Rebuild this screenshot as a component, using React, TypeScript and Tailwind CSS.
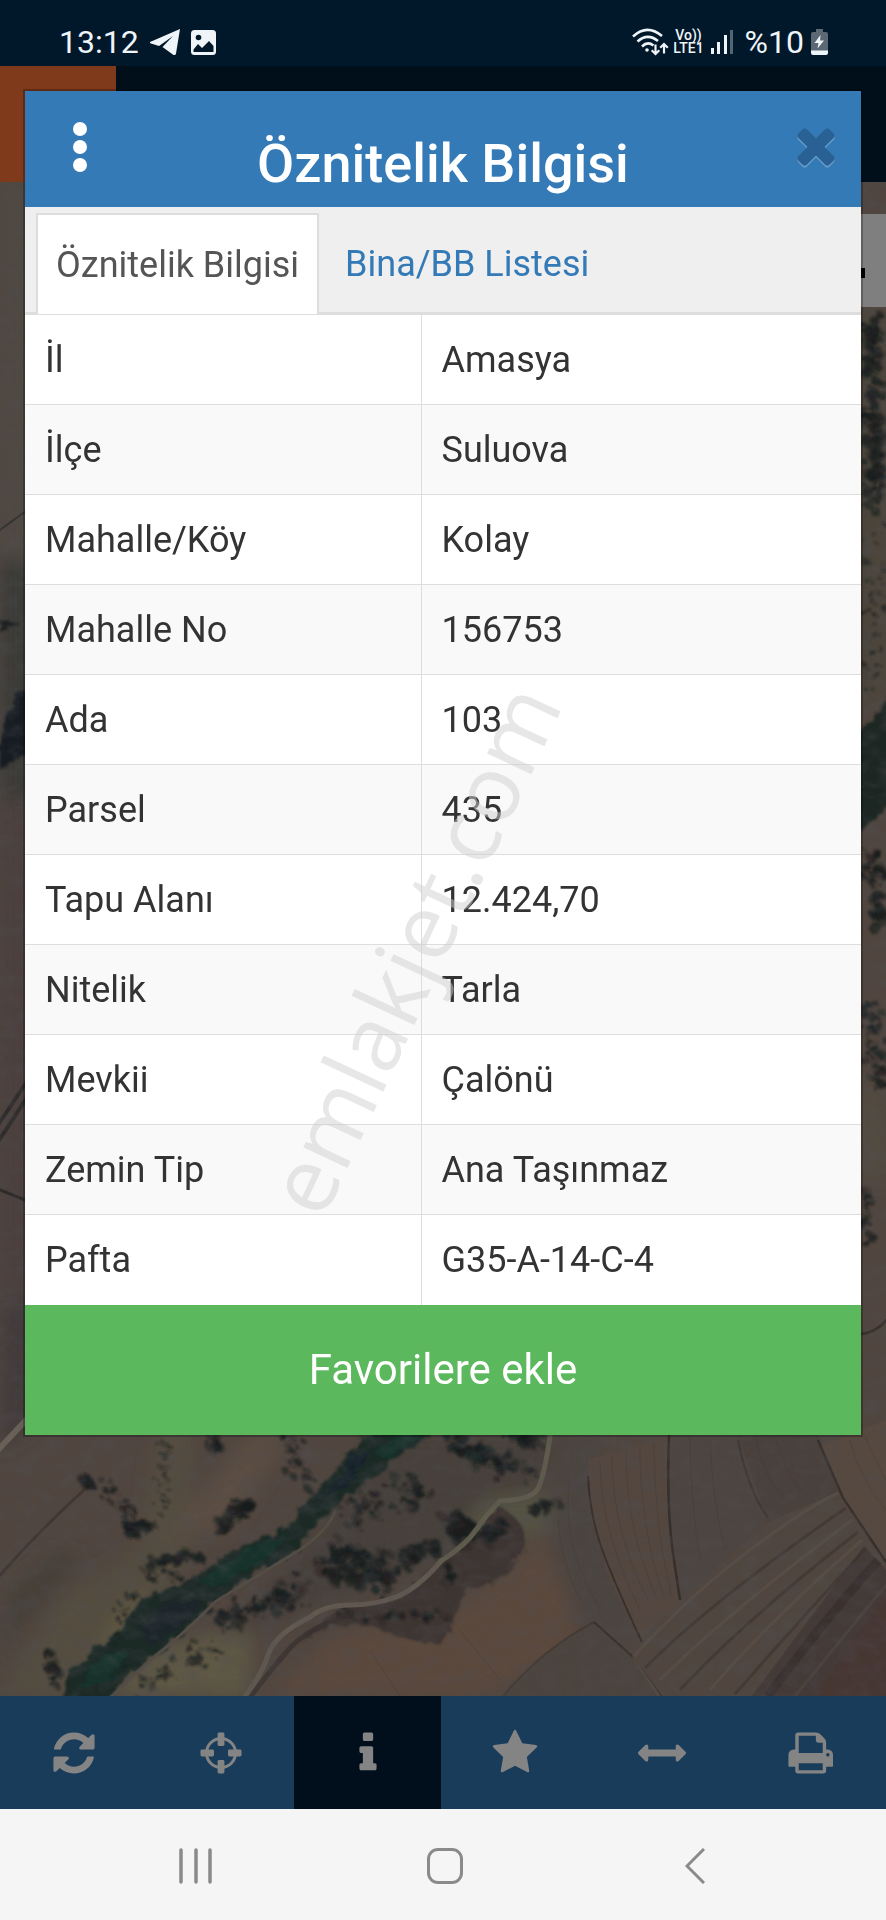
import React, { useState } from 'react';

interface Attribute {
  label: string;
  value: string;
}

interface Blob {
  x: number;
  y: number;
  rx: number;
  ry: number;
  fill: string;
  opacity: number;
}

interface Patch {
  x1: number;
  y1: number;
  x2: number;
  y2: number;
  spread: number;
  count: number;
  size: number;
}

const attributes: Attribute[] = [
  { label: 'İl', value: 'Amasya' },
  { label: 'İlçe', value: 'Suluova' },
  { label: 'Mahalle/Köy', value: 'Kolay' },
  { label: 'Mahalle No', value: '156753' },
  { label: 'Ada', value: '103' },
  { label: 'Parsel', value: '435' },
  { label: 'Tapu Alanı', value: '12.424,70' },
  { label: 'Nitelik', value: 'Tarla' },
  { label: 'Mevkii', value: 'Çalönü' },
  { label: 'Zemin Tip', value: 'Ana Taşınmaz' },
  { label: 'Pafta', value: 'G35-A-14-C-4' },
];

const REFRESH =
  'M1511 1056q0 5-1 7-64 268-268 434.5t-478 166.5q-146 0-282.5-55t-243.5-157l-129 129q-19 19-45 19t-45-19-19-45v-448q0-26 19-45t45-19h448q26 0 45 19t19 45-19 45l-137 137q71 66 161 102t187 36q134 0 250-65t186-179q11-17 53-117 8-23 30-23h192q13 0 22.5 9.5t9.5 22.5zm25-800v448q0 26-19 45t-45 19h-448q-26 0-45-19t-19-45 19-45l138-138q-148-137-349-137-134 0-250 65t-186 179q-11 17-53 117-8 23-30 23h-199q-13 0-22.5-9.5t-9.5-22.5v-7q65-268 270-434.5t480-166.5q146 0 284 55.5t245 156.5l130-129q19-19 45-19t45 19 19 45z';
const INFO =
  'M1216 1344v128q0 26-19 45t-45 19h-512q-26 0-45-19t-19-45v-128q0-26 19-45t45-19h64v-384h-64q-26 0-45-19t-19-45v-128q0-26 19-45t45-19h384q26 0 45 19t19 45v576h64q26 0 45 19t19 45zm-128-1152v192q0 26-19 45t-45 19h-256q-26 0-45-19t-19-45v-192q0-26 19-45t45-19h256q26 0 45 19t19 45z';
const STAR =
  'M1728 647q0 22-26 48l-363 354 86 500q1 7 1 20 0 21-10.5 35.5t-30.5 14.5q-19 0-40-12l-449-236-449 236q-22 12-40 12-21 0-31.5-14.5t-10.5-35.5q0-6 2-20l86-500-364-354q-25-27-25-48 0-37 56-46l502-73 225-455q19-41 49-41t49 41l225 455 502 73q56 9 56 46z';
const ARROWS =
  'M1792 896q0 26-19 45l-256 256q-19 19-45 19t-45-19-19-45v-128h-1024v128q0 26-19 45t-45 19-45-19l-256-256q-19-19-19-45t19-45l256-256q19-19 45-19t45 19 19 45v128h1024v-128q0-26 19-45t45-19 45 19l256 256q19 19 19 45z';
const PRINT =
  'M448 1536h896v-256h-896v256zm0-640h896v-384h-160q-40 0-68-28t-28-68v-160h-640v640zm1152 64q0-26-19-45t-45-19-45 19-19 45 19 45 45 19 45-19 19-45zm128 0v416q0 13-9.5 22.5t-22.5 9.5h-224v160q0 40-28 68t-68 28h-960q-40 0-68-28t-28-68v-160h-224q-13 0-22.5-9.5t-9.5-22.5v-416q0-79 56.5-135.5t135.5-56.5h64v-544q0-40 28-68t68-28h672q40 0 88 20t76 48l152 152q28 28 48 76t20 88v256h64q79 0 135.5 56.5t56.5 135.5z';
const TIMES =
  'M1490 1322q0 40-28 68l-136 136q-28 28-68 28t-68-28l-294-294-294 294q-28 28-68 28t-68-28l-136-136q-28-28-28-68t28-68l294-294-294-294q-28-28-28-68t28-68l136-136q28-28 68-28t68 28l294 294 294-294q28-28 68-28t68 28l136 136q28 28 28 68t-28 68l-294 294 294 294q28 28 28 68z';

interface FaIconProps {
  path: string;
  viewBox?: string;
  className?: string;
}

const FaIcon: React.FC<FaIconProps> = ({ path, viewBox = '0 0 1792 1792', className = 'h-12 w-12' }) => (
  <svg viewBox={viewBox} className={className} fill="currentColor" aria-hidden="true">
    <path d={path} />
  </svg>
);

const CrosshairIcon: React.FC = () => (
  <svg viewBox="0 0 48 48" className="h-12 w-12" fill="currentColor" aria-hidden="true">
    <circle cx="24" cy="24" r="14.5" fill="none" stroke="currentColor" strokeWidth="3" />
    <rect x="20.6" y="3.5" width="6.8" height="13.5" rx="1.4" />
    <rect x="20.6" y="31" width="6.8" height="13.5" rx="1.4" />
    <rect x="3.5" y="20.6" width="13.5" height="6.8" rx="1.4" />
    <rect x="31" y="20.6" width="13.5" height="6.8" rx="1.4" />
  </svg>
);

// Clumps of shrubs along the valley and on both sides of the window
const patches: Patch[] = [
  { x1: 160, y1: 1440, x2: 165, y2: 1510, spread: 12, count: 30, size: 3 },
  { x1: 213, y1: 1436, x2: 218, y2: 1450, spread: 6, count: 16, size: 6 },
  { x1: 86, y1: 1480, x2: 90, y2: 1490, spread: 5, count: 14, size: 6 },
  { x1: 100, y1: 1480, x2: 135, y2: 1520, spread: 14, count: 26, size: 4 },
  { x1: 128, y1: 1530, x2: 150, y2: 1526, spread: 8, count: 40, size: 6 },
  { x1: 218, y1: 1528, x2: 250, y2: 1500, spread: 8, count: 46, size: 7 },
  { x1: 146, y1: 1562, x2: 200, y2: 1555, spread: 7, count: 44, size: 6 },
  { x1: 150, y1: 1575, x2: 180, y2: 1575, spread: 10, count: 20, size: 4 },
  { x1: 285, y1: 1438, x2: 305, y2: 1480, spread: 16, count: 34, size: 4 },
  { x1: 450, y1: 1440, x2: 525, y2: 1475, spread: 14, count: 90, size: 6 },
  { x1: 510, y1: 1436, x2: 540, y2: 1440, spread: 10, count: 40, size: 6 },
  { x1: 345, y1: 1515, x2: 430, y2: 1490, spread: 22, count: 60, size: 5 },
  { x1: 455, y1: 1520, x2: 462, y2: 1535, spread: 14, count: 60, size: 8 },
  { x1: 330, y1: 1560, x2: 385, y2: 1575, spread: 24, count: 110, size: 7 },
  { x1: 405, y1: 1560, x2: 435, y2: 1545, spread: 12, count: 40, size: 6 },
  { x1: 220, y1: 1620, x2: 300, y2: 1590, spread: 18, count: 110, size: 5 },
  { x1: 140, y1: 1685, x2: 220, y2: 1640, spread: 20, count: 44, size: 4 },
  { x1: 110, y1: 1640, x2: 135, y2: 1585, spread: 10, count: 20, size: 3 },
  { x1: 485, y1: 1535, x2: 500, y2: 1525, spread: 10, count: 40, size: 6 },
  { x1: 535, y1: 1512, x2: 555, y2: 1502, spread: 8, count: 20, size: 5 },
  { x1: 446, y1: 1565, x2: 448, y2: 1580, spread: 6, count: 16, size: 5 },
  { x1: 345, y1: 1614, x2: 450, y2: 1618, spread: 8, count: 40, size: 4 },
  { x1: 50, y1: 1655, x2: 56, y2: 1680, spread: 8, count: 24, size: 5 },
  { x1: 872, y1: 320, x2: 876, y2: 510, spread: 14, count: 170, size: 6 },
  { x1: 872, y1: 520, x2: 876, y2: 690, spread: 16, count: 50, size: 3 },
  { x1: 874, y1: 855, x2: 880, y2: 925, spread: 12, count: 60, size: 6 },
  { x1: 872, y1: 1010, x2: 878, y2: 1090, spread: 12, count: 60, size: 5 },
  { x1: 866, y1: 1190, x2: 870, y2: 1245, spread: 7, count: 30, size: 5 },
];

const shrubColors = ['#14191b', '#1a1e20', '#1d211d', '#222020', '#152020'];

const makeShrubs = (): Blob[] => {
  let seed = 71;
  const rnd = () => {
    seed = (seed * 16807) % 2147483647;
    return seed / 2147483647;
  };
  return patches.flatMap((p) =>
    Array.from({ length: p.count }, () => {
      const t = rnd();
      const size = p.size * (0.25 + rnd() * 0.75);
      return {
        x: Math.round(p.x1 + (p.x2 - p.x1) * t + (rnd() + rnd() - 1) * p.spread),
        y: Math.round(p.y1 + (p.y2 - p.y1) * t + (rnd() + rnd() - 1) * p.spread),
        rx: size,
        ry: size * (0.6 + rnd() * 0.5),
        fill: shrubColors[Math.floor(rnd() * shrubColors.length)],
        opacity: 0.35 + rnd() * 0.45,
      };
    })
  );
};

const shrubs = makeShrubs();

const SatelliteMap: React.FC = () => (
  <svg
    viewBox="0 182 886 1514"
    preserveAspectRatio="xMidYMax slice"
    className="min-h-0 w-full flex-1"
    aria-hidden="true"
  >
    <defs>
      <filter id="soft" x="-20%" y="-20%" width="140%" height="140%">
        <feGaussianBlur stdDeviation="9" />
      </filter>
      <filter id="rough" x="-5%" y="-5%" width="110%" height="110%">
        <feTurbulence type="fractalNoise" baseFrequency="0.09" numOctaves="3" seed="4" />
        <feDisplacementMap in="SourceGraphic" scale="10" />
        <feGaussianBlur stdDeviation="1" />
      </filter>
      <filter id="grain" x="0" y="0" width="100%" height="100%">
        <feTurbulence type="fractalNoise" baseFrequency="0.05 0.08" numOctaves="4" seed="9" />
        <feColorMatrix values="0 0 0 0 0.08  0 0 0 0 0.08  0 0 0 0 0.09  1.6 0 0 0 -0.62" />
      </filter>
    </defs>
    <rect y="182" width="886" height="1514" fill="#51463f" />

    {/* soil tones */}
    <g filter="url(#soft)">
      <path d="M0 182H40V560H0z" fill="#504943" />
      <path d="M0 560H40V800H0z" fill="#3b3a38" />
      <path d="M0 800H40V1300H0z" fill="#4b413e" />
      <path d="M0 1300H40V1420L0 1450z" fill="#433b3b" />
      <path d="M160 1420L140 1550 60 1600 0 1696H70L150 1610 190 1560 190 1420z" fill="#554d3f" />
      <path d="M250 1434L160 1540 230 1530 290 1434z" fill="#5b4d43" />
      <path d="M10 1590L60 1550 80 1560 0 1650z" fill="#443f39" />
      <path d="M100 1640L130 1600 150 1590 110 1660z" fill="#625a42" />
      <path d="M150 1650L250 1625 250 1696H110z" fill="#5e5944" />
      <path d="M380 1434H560L530 1510 440 1560 330 1600 220 1640 330 1520z" fill="#46403b" />
      <path d="M480 1500L540 1490 560 1530 500 1540 450 1560z" fill="#555343" />
      <path d="M330 1640L470 1600 540 1540 580 1620 560 1660 480 1696H270z" fill="#5b493e" />
      <path d="M560 1434H600L610 1570 640 1640 580 1630 550 1520z" fill="#4b4440" />
      <path d="M850 310H886V700H850z" fill="#4c453b" />
      <path d="M850 1090H886V1180H850z" fill="#534b41" />
    </g>

    {/* ploughed fields east of the valley */}
    <path d="M588 1460L668 1436 669 1520 681 1600 640 1640 606 1570 590 1510z" fill="#54473f" />
    <path d="M670 1434H740L768 1520 681 1600 669 1520z" fill="#4d4541" />
    <path d="M738 1434H818L838 1492 768 1522z" fill="#4a413c" />
    <path d="M500 1700Q540 1650 594 1622L633 1657 664 1700z" fill="#4c443e" />
    <path d="M633 1657L700 1592 836 1493 864 1546 750 1696H664z" fill="#50463f" />
    <path d="M864 1546L886 1570V1696H752z" fill="#443a37" />
    <path d="M820 1446L886 1420V1562L842 1500z" fill="#57493f" />
    <path d="M886 1590L815 1696H886z" fill="#473733" />
    <g fill="none" stroke="#2c2624" strokeWidth="2" opacity="0.7">
      <path d="M588 1476Q590 1520 606 1560T642 1642" />
      <path d="M669 1434Q666 1510 674 1560L680 1600" strokeWidth="2.5" />
      <path d="M738 1440Q748 1490 768 1518" opacity="0.6" />
      <path d="M818 1440L843 1498 886 1562" strokeWidth="2.5" />
      <path d="M594 1622L633 1657 664 1700" opacity="0.8" />
      <path d="M500 1700Q540 1650 594 1622" opacity="0.4" />
    </g>
    <g fill="none" stroke="#5f544c" strokeWidth="3" opacity="0.55">
      <path d="M633 1657Q690 1595 750 1550T838 1493" />
      <path d="M633 1657L662 1700" />
      <path d="M645 1668Q710 1602 846 1508" stroke="#3b322d" />
      <path d="M660 1680Q725 1615 852 1520" />
      <path d="M680 1690Q745 1620 858 1532" stroke="#3b322d" />
      <path d="M710 1690Q770 1620 862 1540" />
      <path d="M735 1694Q800 1620 866 1548" stroke="#3b322d" />
      <path d="M768 1696Q820 1625 878 1560" stroke="#332b2a" strokeWidth="9" />
      <path d="M795 1696L886 1585" stroke="#544a44" />
    </g>
    <g fill="none" stroke="#3f3630" strokeWidth="1" opacity="0.3">
      <path d="M600 1460Q600 1530 640 1610M612 1456Q612 1530 648 1600M626 1450Q626 1530 656 1596M640 1446Q640 1530 664 1596M654 1442Q654 1530 672 1596" />
      <path d="M570 1480Q560 1540 600 1610M558 1520Q560 1560 580 1600M690 1436Q690 1500 700 1560M710 1436Q712 1500 725 1550M755 1436Q765 1480 785 1500M775 1436Q785 1470 800 1490" />
      <path d="M850 1440Q860 1480 886 1510M865 1436Q875 1460 886 1480" />
      <path d="M370 1650L400 1696M460 1630L500 1680" />
    </g>

    {/* bare hillside below the road */}
    <path
      d="M497 1506Q522 1518 524 1535T508 1570 466 1588Q458 1610 452 1628T425 1642Q405 1640 385 1631T330 1626L300 1640 340 1608 396 1600 443 1560 476 1536z"
      fill="#3c3433"
      filter="url(#rough)"
    />

    {/* stream and its vegetation */}
    <g filter="url(#rough)">
      <path
        d="M64 1700L68 1674 92 1652 122 1630 142 1598 192 1580 233 1550 288 1528 300 1508 330 1478 350 1452 376 1425H440L400 1455 365 1482 332 1508 312 1528 298 1550 256 1572 216 1599 187 1630 160 1652 132 1672 108 1700z"
        fill="#1a2b27"
      />
      <path d="M75 1690L100 1656 130 1650 110 1680zM200 1580L240 1552 290 1534 270 1556 215 1588zM375 1455L400 1430 425 1432 390 1460z" fill="#183229" />
      <path d="M140 1625L165 1602 205 1600 180 1628 150 1648z" fill="#1c2529" />
      <path d="M338 1482L352 1455 372 1450 352 1482 318 1502z" fill="#18232b" />
      <path d="M0 735L12 705 30 680V750L0 770z" fill="#131d22" />
      <path d="M0 620L20 624 0 632z" fill="#1b2420" />
      <path d="M855 735L890 700V800L855 838z" fill="#1a2824" />
    </g>
    <g filter="url(#rough)">
      {shrubs.map((s, i) => (
        <ellipse key={i} cx={s.x} cy={s.y} rx={s.rx} ry={s.ry} fill={s.fill} opacity={s.opacity} />
      ))}
    </g>

    {/* dirt roads */}
    <g fill="none" strokeLinecap="round" strokeLinejoin="round">
      <path d="M248 1700Q272 1668 290 1648T350 1614" stroke="#362f2d" strokeWidth="5" opacity="0.7" />
      <path d="M242 1700Q262 1675 268 1655T310 1617Q325 1605 350 1605T396 1597 441 1561" stroke="#625950" strokeWidth="5" />
      <path d="M441 1561Q466 1545 476 1530T500 1501Q530 1500 537 1490T551 1430" stroke="#605c4d" strokeWidth="5" />
      <path d="M110 1698Q140 1668 165 1648T215 1602Q255 1577 290 1556T335 1512" stroke="#534d44" strokeWidth="3" />
      <path d="M-4 1452L28 1418" stroke="#6a6159" strokeWidth="6" />
      <path d="M0 1575Q40 1530 84 1490" stroke="#37302c" strokeWidth="3" opacity="0.7" />
      <path d="M0 530L30 508" stroke="#35332f" strokeWidth="2" />
      <path d="M-2 1125L28 1080M-2 1142L28 1096" stroke="#2e2c2b" strokeWidth="4" />
      <path d="M0 1190L30 1202" stroke="#2e2a28" strokeWidth="3" />
      <path d="M858 1334Q876 1334 888 1318" stroke="#37302d" strokeWidth="3" />
    </g>
    <rect y="182" width="886" height="1514" filter="url(#grain)" opacity="0.45" />
  </svg>
);

const StatusBar: React.FC = () => (
  <header className="flex h-[66px] items-center justify-between bg-[#00182a] pt-[18px] pr-[58px] pl-[59px] text-[32px] leading-none text-[#eef4f8]">
    <div className="flex items-center gap-[11px]">
      <span>13:12</span>
      <svg viewBox="0 0 30 26" className="h-[26px] w-[30px]" fill="currentColor" aria-hidden="true">
        <path d="M30 0L0 13q-.5 1 1 1.600l8 2.400L23 7 12.500 18l11 8q2 .6 2.500-1.500z" />
      </svg>
      <svg viewBox="0 0 25 25" className="h-[25px] w-[25px]" aria-hidden="true">
        <rect width="25" height="25" rx="3.500" fill="currentColor" />
        <circle cx="7.500" cy="7.500" r="2.800" fill="#00182a" />
        <path d="M2.500 19.500L7 14l4 4 7-7 4.500 5v6h-20z" fill="#00182a" />
      </svg>
    </div>
    <div className="flex items-center gap-[7px]">
      <div className="flex items-center gap-1">
        <svg viewBox="0 0 37 28" className="h-7 w-[37px]" fill="none" stroke="currentColor" strokeWidth="2.600" aria-hidden="true">
          <path d="M1 8.500Q15 -4.500 30 8M5.500 13.500Q15.500 4.500 26 13M10 18.500Q15.500 13 21.500 17.500" />
          <circle cx="15" cy="22" r="1.800" fill="currentColor" stroke="none" />
          <path d="M23.500 16.500V26M19.700 22.200l3.800 3.800 3.800-3.800M32 25.500V16M28.200 19.800L32 16l3.800 3.800" strokeWidth="2.200" />
        </svg>
        <div className="flex flex-col items-center text-[14px] leading-[13px] font-medium">
          <span>Vo))</span>
          <span>LTE1</span>
        </div>
      </div>
      <svg viewBox="0 0 23 24" className="h-6 w-[23px]" fill="currentColor" aria-hidden="true">
        <rect y="18" width="3" height="6" />
        <rect x="6" y="12" width="3" height="12" />
        <rect x="13" y="5" width="3" height="19" />
        <rect x="19" width="3" height="24" opacity="0.35" />
      </svg>
      <span className="pl-1">%10</span>
      <svg viewBox="0 0 17 26" className="h-[26px] w-[17px]" aria-hidden="true">
        <path d="M5 0h7v3h3q2 0 2 2v17H0V5q0-2 2-2h3z" fill="#5c6873" />
        <path d="M0 21.500h17V24q0 2-2 2H2q-2 0-2-2z" fill="currentColor" />
        <path d="M9.500 6L3.500 14h4L6.500 19.500 13 11.500H9z" fill="currentColor" />
      </svg>
    </div>
  </header>
);

const Toolbar: React.FC = () => {
  const [active, setActive] = useState('info');
  const tools = [
    { id: 'refresh', label: 'Yenile', icon: <FaIcon path={REFRESH} viewBox="-128 0 1792 1792" /> },
    { id: 'locate', label: 'Konum', icon: <CrosshairIcon /> },
    { id: 'info', label: 'Bilgi', icon: <FaIcon path={INFO} /> },
    { id: 'favorites', label: 'Favoriler', icon: <FaIcon path={STAR} /> },
    { id: 'measure', label: 'Ölçüm', icon: <FaIcon path={ARROWS} /> },
    { id: 'print', label: 'Yazdır', icon: <FaIcon path={PRINT} viewBox="-64 0 1792 1792" /> },
  ];

  return (
    <nav className="grid h-[113px] grid-cols-6 bg-[#1a3c5b] pr-1 text-[#848484]">
      {tools.map((tool) => (
        <button
          key={tool.id}
          aria-label={tool.label}
          onClick={() => setActive(tool.id)}
          className={
            active === tool.id
              ? 'flex items-center justify-center bg-[#000f1b]'
              : 'flex items-center justify-center'
          }
        >
          {tool.icon}
        </button>
      ))}
    </nav>
  );
};

const SystemNav: React.FC = () => (
  <nav className="grid h-[111px] grid-cols-3 bg-[#f5f5f5] pt-0.5 pr-[66px] pl-[70px] text-[#8a8a8a]">
    <button aria-label="Son uygulamalar" className="flex items-center justify-center">
      <svg viewBox="0 0 36 36" className="h-9 w-9" stroke="currentColor" strokeWidth="3.500" strokeLinecap="round" aria-hidden="true">
        <path d="M4 2v32M19 2v32M33 2v32" />
      </svg>
    </button>
    <button aria-label="Ana ekran" className="flex items-center justify-center">
      <svg viewBox="0 0 36 36" className="h-9 w-9" fill="none" stroke="currentColor" strokeWidth="3" aria-hidden="true">
        <rect x="1.500" y="1.500" width="33" height="33" rx="9.500" />
      </svg>
    </button>
    <button aria-label="Geri" className="flex items-center justify-center">
      <svg viewBox="0 0 20 36" className="h-9 w-5" fill="none" stroke="currentColor" strokeWidth="3" aria-hidden="true">
        <path d="M19 1L2 18l17 17" />
      </svg>
    </button>
  </nav>
);

const AttributeDialog: React.FC = () => {
  const [tab, setTab] = useState('attributes');

  const tabClass = (id: string) =>
    tab === id
      ? '-mb-0.5 border-2 border-b-0 border-[#ddd] bg-white px-[18px] text-[#555]'
      : 'border-2 border-b-0 border-transparent px-[18px] text-[#337ab7]';

  return (
    <section role="dialog" aria-label="Öznitelik Bilgisi" className="relative mx-[25px] mt-[25px] bg-white shadow-[0_0_0_2px_rgba(0,0,0,0.25)]">
      <div className="grid h-[116px] grid-cols-[110px_1fr_110px] bg-[#337ab7] text-white">
        <button aria-label="Menü" className="flex items-center justify-center pb-1">
          <svg viewBox="0 0 14 50" className="h-[50px] w-[14px]" fill="currentColor" aria-hidden="true">
            <circle cx="7" cy="7" r="7" />
            <circle cx="7" cy="25" r="7" />
            <circle cx="7" cy="43" r="7" />
          </svg>
        </button>
        <h1 className="pt-10 text-center text-[54px] leading-[66px] font-medium">Öznitelik Bilgisi</h1>
        <button aria-label="Kapat" className="flex items-center justify-center pb-2 pl-5 text-[#2a6194] drop-shadow-[0_2px_0_rgba(255,255,255,0.25)]">
          <FaIcon path={TIMES} className="h-14 w-14" />
        </button>
      </div>
      <div role="tablist" className="flex h-[107px] gap-1.5 border-b-2 border-[#ddd] bg-[#efefef] px-[11px] pt-1.5 text-[36px]">
        <button role="tab" aria-selected={tab === 'attributes'} onClick={() => setTab('attributes')} className={tabClass('attributes')}>
          Öznitelik Bilgisi
        </button>
        <button role="tab" aria-selected={tab === 'buildings'} onClick={() => setTab('buildings')} className={tabClass('buildings')}>
          Bina/BB Listesi
        </button>
      </div>
      <table className="w-full table-fixed text-[36px] text-[#333]">
        <colgroup>
          <col className="w-[396px]" />
          <col />
        </colgroup>
        <tbody>
          {attributes.map((row) => (
            <tr key={row.label} className="h-[90px] border-t border-[#ddd] even:bg-[#f9f9f9]">
              <th scope="row" className="px-5 text-left font-normal">{row.label}</th>
              <td className="border-l border-[#ddd] px-5">{row.value}</td>
            </tr>
          ))}
        </tbody>
      </table>
      <button className="h-[130px] w-full bg-[#5cb85c] text-[42px] text-white">Favorilere ekle</button>
    </section>
  );
};

const App: React.FC = () => {
  return (
    <div className="relative flex min-h-screen flex-col overflow-hidden bg-[#00182a] font-['Roboto',sans-serif]">
      <StatusBar />
      <main className="relative flex-1 pb-12">
        <div className="absolute inset-0 flex flex-col">
          <div className="h-[116px] shrink-0 bg-[#000f1a]">
            <div className="h-full w-[116px] bg-[#7f391b]" />
          </div>
          <SatelliteMap />
        </div>
        {/* search box of the map, mostly hidden by the dialog */}
        <div className="absolute top-[148px] right-0 flex h-[93px] w-20 items-center justify-end bg-[#7f7f7f] pt-6 pr-[21px]">
          <span className="h-[10px] w-8 bg-black" />
        </div>
        <AttributeDialog />
      </main>
      <Toolbar />
      <SystemNav />
      <div className="pointer-events-none absolute inset-0 flex items-center justify-center pr-[62px] pb-6">
        <span className="-rotate-65 font-['Open_Sans',sans-serif] text-[91px] leading-none text-[rgba(208,208,208,0.5)]">
          emlakjet.com
        </span>
      </div>
    </div>
  );
};

export default App;
